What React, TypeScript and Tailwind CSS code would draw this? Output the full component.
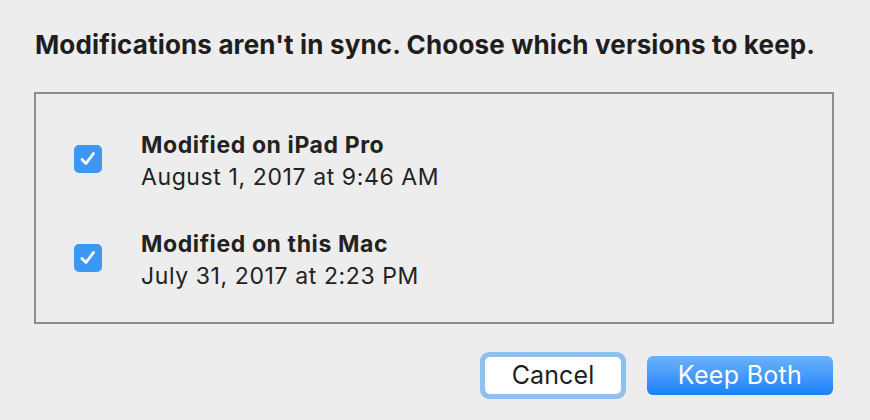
import { useState } from 'react'

type Version = {
  id: string
  label: string
  date: string
}

const VERSIONS: Version[] = [
  { id: 'ipad', label: 'Modified on iPad Pro', date: 'August 1, 2017 at 9:46 AM' },
  { id: 'mac', label: 'Modified on this Mac', date: 'July 31, 2017 at 2:23 PM' },
]

function CheckBox({ checked, onToggle }: { checked: boolean; onToggle: () => void }) {
  return (
    <button
      className={
        checked
          ? 'flex h-[28px] w-[28px] shrink-0 items-center justify-center rounded-[5px] bg-[#3d97f4]'
          : 'flex h-[28px] w-[28px] shrink-0 items-center justify-center rounded-[5px] border border-[#b5b5b5] bg-white'
      }
      onClick={onToggle}
      type="button"
    >
      {checked ? (
        <svg height="20" viewBox="0 0 20 20" width="20">
          <path d="M4 10.5 L8 14.5 L15.5 4.5" fill="none" stroke="white" strokeLinecap="round" strokeLinejoin="round" strokeWidth="2.8" />
        </svg>
      ) : null}
    </button>
  )
}

export default function App() {
  const [kept, setKept] = useState<Record<string, boolean>>({ ipad: true, mac: true })

  return (
    <div className="h-[420px] w-[870px] bg-[#ededed] pl-[34px] pr-[36px] pt-[30px] font-['Inter','Liberation_Sans',sans-serif] text-[#222]">
      <h1 className="pl-[1px] text-[26px] font-bold leading-[30px] tracking-[0.15px] text-[#1e1e1e]">
        Modifications aren't in sync. Choose which versions to keep.
      </h1>

      <div className="mt-[32px] flex h-[232px] flex-col justify-center gap-[30px] border-2 border-[#8d8d8d] pl-[38px]">
        {VERSIONS.map(version => (
          <div className="flex items-center gap-[39px]" key={version.id}>
            <CheckBox
              checked={kept[version.id]}
              onToggle={() => setKept(prev => ({ ...prev, [version.id]: !prev[version.id] }))}
            />
            <div className="mt-[5px] flex flex-col text-[23px] leading-[32px] tracking-[0.6px]">
              <span className="font-bold">{version.label}</span>
              <span>{version.date}</span>
            </div>
          </div>
        ))}
      </div>

      <div className="mt-[28px] flex justify-end gap-[21px] pr-[1px]">
        <div className="rounded-[9px] bg-[#8fc0f0] p-[5px]">
          <button
            className="h-[37px] w-[136px] rounded-[5px] bg-white text-[25px] tracking-[0.1px] text-[#1e1e1e]"
            type="button"
          >
            Cancel
          </button>
        </div>
        <button
          className="mt-[4px] h-[39px] w-[186px] rounded-[6px] bg-gradient-to-b from-[#6ab2fa] to-[#1580fb] text-[25px] tracking-[0.3px] text-white"
          type="button"
        >
          Keep Both
        </button>
      </div>
    </div>
  )
}
